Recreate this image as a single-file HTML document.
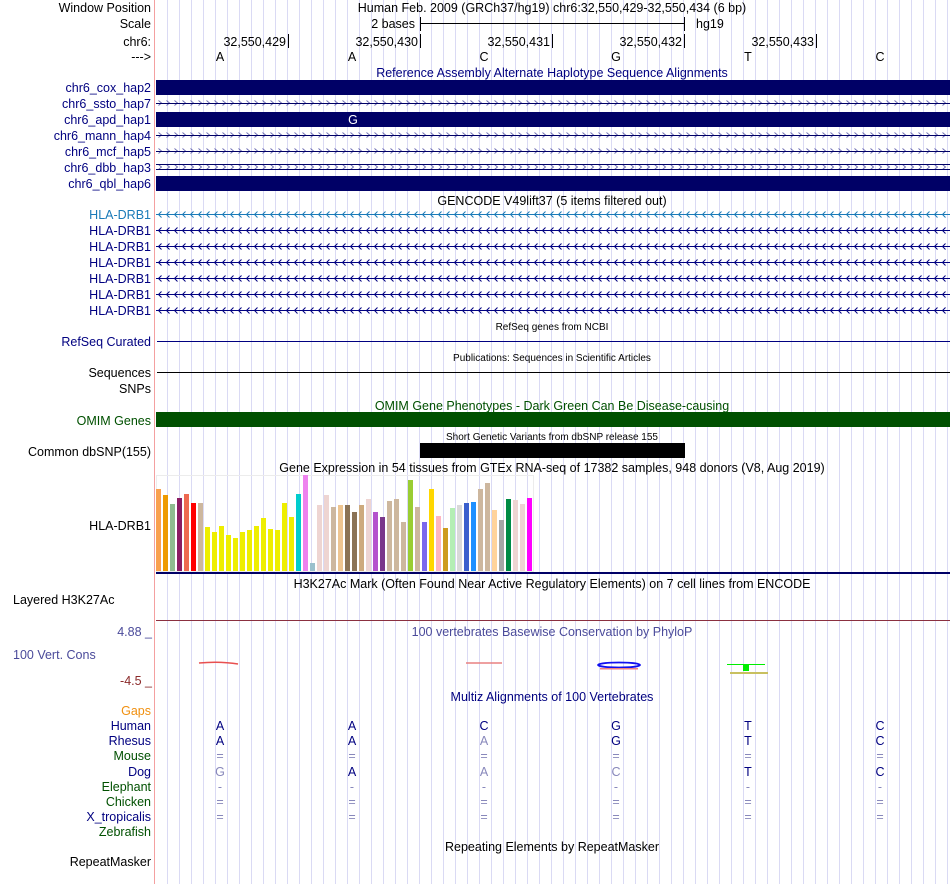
<!DOCTYPE html>
<html><head><meta charset="utf-8"><style>
html,body{margin:0;padding:0;background:#fff;width:950px;height:884px;overflow:hidden}
svg{display:block}
text{font-family:"Liberation Sans",sans-serif;font-size:12.5px}
.r{text-anchor:end}.m{text-anchor:middle}
.n{fill:#000080}.k{fill:#000}.g{fill:#005000}
.s{font-size:10px}
</style></head><body>
<svg width="950" height="884" xmlns="http://www.w3.org/2000/svg">
<defs>
<pattern id="grid" x="167" y="0" width="12" height="10" patternUnits="userSpaceOnUse">
<rect x="0" y="0" width="1" height="10" fill="#dadaf4"/>
</pattern>
<pattern id="fw" x="156" y="4" width="8" height="16" patternUnits="userSpaceOnUse">
<path d="M2.5 0.5 L5.5 3 L2.5 5.5" fill="none" stroke="#6a6ab0" stroke-width="0.9"/>
</pattern>
<pattern id="bk" x="156" y="3" width="8" height="16" patternUnits="userSpaceOnUse">
<path d="M5.5 0.5 L2.5 3.5 L5.5 6.5" fill="none" stroke="#000080" stroke-width="1"/>
</pattern>
<pattern id="bk2" x="156" y="3" width="8" height="16" patternUnits="userSpaceOnUse">
<path d="M5.5 0.5 L2.5 3.5 L5.5 6.5" fill="none" stroke="#1a7ab8" stroke-width="1"/>
</pattern>
</defs>
<rect x="156" y="0" width="794" height="884" fill="url(#grid)"/>
<rect x="154" y="0" width="1" height="884" fill="#f4a0a0"/>

<!-- ruler -->
<text x="151" y="12" class="r k">Window Position</text>
<text x="552" y="12" class="m k">Human Feb. 2009 (GRCh37/hg19)   chr6:32,550,429-32,550,434 (6 bp)</text>
<text x="151" y="28" class="r k">Scale</text>
<text x="415" y="28" class="r k">2 bases</text>
<rect x="420" y="17" width="1" height="14" fill="#000"/><rect x="420" y="23" width="264" height="1" fill="#000"/><rect x="684" y="17" width="1" height="14" fill="#000"/>
<text x="696" y="28" class="k">hg19</text>
<text x="151" y="46" class="r k">chr6:</text>
<text x="286" y="46" class="r k">32,550,429</text><rect x="288" y="34" width="1" height="14" fill="#000"/>
<text x="418" y="46" class="r k">32,550,430</text><rect x="420" y="34" width="1" height="14" fill="#000"/>
<text x="550" y="46" class="r k">32,550,431</text><rect x="552" y="34" width="1" height="14" fill="#000"/>
<text x="682" y="46" class="r k">32,550,432</text><rect x="684" y="34" width="1" height="14" fill="#000"/>
<text x="814" y="46" class="r k">32,550,433</text><rect x="816" y="34" width="1" height="14" fill="#000"/>
<text x="151" y="61" class="r k">---&gt;</text>
<text x="220" y="61" class="m k">A</text><text x="352" y="61" class="m k">A</text><text x="484" y="61" class="m k">C</text><text x="616" y="61" class="m k">G</text><text x="748" y="61" class="m k">T</text><text x="880" y="61" class="m k">C</text>

<!-- haplotypes -->
<text x="552" y="77" class="m n">Reference Assembly Alternate Haplotype Sequence Alignments</text>
<text x="151" y="92" class="r n">chr6_cox_hap2</text><rect x="156" y="80" width="794" height="15" fill="#000066"/>
<text x="151" y="108" class="r n">chr6_ssto_hap7</text><rect x="156" y="100" width="794" height="7" fill="url(#fw)"/><rect x="156" y="103" width="794" height="1" fill="#000066"/>
<text x="151" y="124" class="r n">chr6_apd_hap1</text><rect x="156" y="112" width="794" height="15" fill="#000066"/><text x="353" y="124" class="m" fill="#fff">G</text>
<text x="151" y="140" class="r n">chr6_mann_hap4</text><rect x="156" y="132" width="794" height="7" fill="url(#fw)"/><rect x="156" y="135" width="794" height="1" fill="#000066"/>
<text x="151" y="156" class="r n">chr6_mcf_hap5</text><rect x="156" y="148" width="794" height="7" fill="url(#fw)"/><rect x="156" y="151" width="794" height="1" fill="#000066"/>
<text x="151" y="172" class="r n">chr6_dbb_hap3</text><rect x="156" y="164" width="794" height="7" fill="url(#fw)"/><rect x="156" y="164" width="794" height="1" fill="#000066"/><rect x="156" y="169" width="794" height="1" fill="#000066"/>
<text x="151" y="188" class="r n">chr6_qbl_hap6</text><rect x="156" y="176" width="794" height="15" fill="#000066"/>

<!-- GENCODE -->
<text x="552" y="205" class="m k">GENCODE V49lift37 (5 items filtered out)</text>
<text x="151" y="219" class="r" fill="#1a7ab8">HLA-DRB1</text><rect x="156" y="211" width="794" height="8" fill="url(#bk2)"/><rect x="156" y="214" width="794" height="1" fill="#1a7ab8"/>
<g>
<text x="151" y="235" class="r n">HLA-DRB1</text><rect x="156" y="227" width="794" height="8" fill="url(#bk)"/><rect x="156" y="230" width="794" height="1" fill="#000080"/>
<text x="151" y="251" class="r n">HLA-DRB1</text><rect x="156" y="243" width="794" height="8" fill="url(#bk)"/><rect x="156" y="246" width="794" height="1" fill="#000080"/>
<text x="151" y="267" class="r n">HLA-DRB1</text><rect x="156" y="259" width="794" height="8" fill="url(#bk)"/><rect x="156" y="262" width="794" height="1" fill="#000080"/>
<text x="151" y="283" class="r n">HLA-DRB1</text><rect x="156" y="275" width="794" height="8" fill="url(#bk)"/><rect x="156" y="278" width="794" height="1" fill="#000080"/>
<text x="151" y="299" class="r n">HLA-DRB1</text><rect x="156" y="291" width="794" height="8" fill="url(#bk)"/><rect x="156" y="294" width="794" height="1" fill="#000080"/>
<text x="151" y="315" class="r n">HLA-DRB1</text><rect x="156" y="307" width="794" height="8" fill="url(#bk)"/><rect x="156" y="310" width="794" height="1" fill="#000080"/>
</g>

<text x="552" y="330" class="m k s">RefSeq genes from NCBI</text>
<text x="151" y="346" class="r n">RefSeq Curated</text><rect x="157" y="341" width="793" height="1" fill="#000080"/>
<text x="552" y="361" class="m k s">Publications: Sequences in Scientific Articles</text>
<text x="151" y="377" class="r k">Sequences</text><rect x="157" y="372" width="793" height="1" fill="#000"/>
<text x="151" y="393" class="r k">SNPs</text>
<text x="552" y="410" class="m g">OMIM Gene Phenotypes - Dark Green Can Be Disease-causing</text>
<text x="151" y="425" class="r g">OMIM Genes</text><rect x="156" y="412" width="794" height="15" fill="#005000"/>
<text x="552" y="440" class="m k s">Short Genetic Variants from dbSNP release 155</text>
<text x="151" y="456" class="r k">Common dbSNP(155)</text><rect x="420" y="443" width="265" height="15" fill="#000"/>
<text x="552" y="472" class="m k">Gene Expression in 54 tissues from GTEx RNA-seq of 17382 samples, 948 donors (V8, Aug 2019)</text>
<text x="151" y="530" class="r k">HLA-DRB1</text>
<rect x="156.5" y="475.5" width="377" height="96" fill="none" stroke="#ececec"/>
<rect x="156" y="572" width="794" height="2" fill="#000066"/>

<text x="552" y="588" class="m k">H3K27Ac Mark (Often Found Near Active Regulatory Elements) on 7 cell lines from ENCODE</text>
<text x="13" y="604" class="k">Layered H3K27Ac</text>
<rect x="156" y="620" width="794" height="1" fill="#8b3040"/>
<text x="152" y="636" class="r" fill="#4a4a9a">4.88 _</text>
<text x="552" y="636" class="m" fill="#4a4a9a">100 vertebrates Basewise Conservation by PhyloP</text>
<text x="13" y="659" fill="#4a4a9a">100 Vert. Cons</text>
<text x="152" y="685" class="r" fill="#8b2a2a">-4.5 _</text>
<path d="M199 663 Q220 661 238 664" stroke="#e85050" stroke-width="1.5" fill="none"/>
<path d="M466 663 L502 663" stroke="#e88080" stroke-width="1.5"/>
<ellipse cx="619" cy="665" rx="21" ry="2.5" fill="none" stroke="#1010f0" stroke-width="1.8"/>
<rect x="600" y="668" width="38" height="1.5" fill="#f08080"/>
<rect x="727" y="664" width="38" height="1" fill="#00ee00"/><rect x="743" y="664" width="6" height="7" fill="#00ee00"/>
<rect x="730" y="672" width="38" height="2" fill="#c8c060"/>

<text x="552" y="701" class="m n">Multiz Alignments of 100 Vertebrates</text>
<text x="151" y="715" class="r" fill="#f09010">Gaps</text>
<text x="151" y="730" class="r n">Human</text>
<text x="151" y="745" class="r n">Rhesus</text>
<text x="151" y="760" class="r g">Mouse</text>
<text x="151" y="776" class="r n">Dog</text>
<text x="151" y="791" class="r g">Elephant</text>
<text x="151" y="806" class="r g">Chicken</text>
<text x="151" y="821" class="r n">X_tropicalis</text>
<text x="151" y="836" class="r g">Zebrafish</text>
<g>
<text x="220" y="730" class="m n">A</text><text x="352" y="730" class="m n">A</text><text x="484" y="730" class="m n">C</text><text x="616" y="730" class="m n">G</text><text x="748" y="730" class="m n">T</text><text x="880" y="730" class="m n">C</text>
<text x="220" y="745" class="m n">A</text><text x="352" y="745" class="m n">A</text><text x="484" y="745" class="m" fill="#8888bb">A</text><text x="616" y="745" class="m n">G</text><text x="748" y="745" class="m n">T</text><text x="880" y="745" class="m n">C</text>
<text x="220" y="760" class="m" fill="#8888bb">=</text><text x="352" y="760" class="m" fill="#8888bb">=</text><text x="484" y="760" class="m" fill="#8888bb">=</text><text x="616" y="760" class="m" fill="#8888bb">=</text><text x="748" y="760" class="m" fill="#8888bb">=</text><text x="880" y="760" class="m" fill="#8888bb">=</text>
<text x="220" y="776" class="m" fill="#8888bb">G</text><text x="352" y="776" class="m n">A</text><text x="484" y="776" class="m" fill="#8888bb">A</text><text x="616" y="776" class="m" fill="#8888bb">C</text><text x="748" y="776" class="m n">T</text><text x="880" y="776" class="m n">C</text>
<text x="220" y="791" class="m" fill="#8888bb">-</text><text x="352" y="791" class="m" fill="#8888bb">-</text><text x="484" y="791" class="m" fill="#8888bb">-</text><text x="616" y="791" class="m" fill="#8888bb">-</text><text x="748" y="791" class="m" fill="#8888bb">-</text><text x="880" y="791" class="m" fill="#8888bb">-</text>
<text x="220" y="806" class="m" fill="#8888bb">=</text><text x="352" y="806" class="m" fill="#8888bb">=</text><text x="484" y="806" class="m" fill="#8888bb">=</text><text x="616" y="806" class="m" fill="#8888bb">=</text><text x="748" y="806" class="m" fill="#8888bb">=</text><text x="880" y="806" class="m" fill="#8888bb">=</text>
<text x="220" y="821" class="m" fill="#8888bb">=</text><text x="352" y="821" class="m" fill="#8888bb">=</text><text x="484" y="821" class="m" fill="#8888bb">=</text><text x="616" y="821" class="m" fill="#8888bb">=</text><text x="748" y="821" class="m" fill="#8888bb">=</text><text x="880" y="821" class="m" fill="#8888bb">=</text>
</g>
<text x="552" y="851" class="m k">Repeating Elements by RepeatMasker</text>
<text x="151" y="866" class="r k">RepeatMasker</text>

<!-- GTEx bars -->
<rect x="156" y="489" width="5" height="82" fill="#f9a04e"/>
<rect x="163" y="495" width="5" height="76" fill="#ee9a00"/>
<rect x="170" y="504" width="5" height="67" fill="#8fbc8f"/>
<rect x="177" y="498" width="5" height="73" fill="#8b1c62"/>
<rect x="184" y="494" width="5" height="77" fill="#ee6a50"/>
<rect x="191" y="503" width="5" height="68" fill="#ff0000"/>
<rect x="198" y="503" width="5" height="68" fill="#cdb79e"/>
<rect x="205" y="527" width="5" height="44" fill="#eeee00"/>
<rect x="212" y="532" width="5" height="39" fill="#eeee00"/>
<rect x="219" y="526" width="5" height="45" fill="#eeee00"/>
<rect x="226" y="535" width="5" height="36" fill="#eeee00"/>
<rect x="233" y="538" width="5" height="33" fill="#eeee00"/>
<rect x="240" y="532" width="5" height="39" fill="#eeee00"/>
<rect x="247" y="530" width="5" height="41" fill="#eeee00"/>
<rect x="254" y="526" width="5" height="45" fill="#eeee00"/>
<rect x="261" y="518" width="5" height="53" fill="#eeee00"/>
<rect x="268" y="529" width="5" height="42" fill="#eeee00"/>
<rect x="275" y="530" width="5" height="41" fill="#eeee00"/>
<rect x="282" y="503" width="5" height="68" fill="#eeee00"/>
<rect x="289" y="517" width="5" height="54" fill="#eeee00"/>
<rect x="296" y="494" width="5" height="77" fill="#00cdcd"/>
<rect x="303" y="475" width="5" height="96" fill="#ee82ee"/>
<rect x="310" y="563" width="5" height="8" fill="#9ac0cd"/>
<rect x="317" y="505" width="5" height="66" fill="#eed5d2"/>
<rect x="324" y="495" width="5" height="76" fill="#eed5d2"/>
<rect x="331" y="507" width="5" height="64" fill="#cdb79e"/>
<rect x="338" y="505" width="5" height="66" fill="#eec591"/>
<rect x="345" y="505" width="5" height="66" fill="#8b7355"/>
<rect x="352" y="512" width="5" height="59" fill="#8b7355"/>
<rect x="359" y="505" width="5" height="66" fill="#cdaa7d"/>
<rect x="366" y="499" width="5" height="72" fill="#eed5d2"/>
<rect x="373" y="512" width="5" height="59" fill="#b452cd"/>
<rect x="380" y="517" width="5" height="54" fill="#7a378b"/>
<rect x="387" y="501" width="5" height="70" fill="#cdb79e"/>
<rect x="394" y="499" width="5" height="72" fill="#cdb79e"/>
<rect x="401" y="522" width="5" height="49" fill="#cdb79e"/>
<rect x="408" y="480" width="5" height="91" fill="#9acd32"/>
<rect x="415" y="507" width="5" height="64" fill="#cdb79e"/>
<rect x="422" y="522" width="5" height="49" fill="#7b68ee"/>
<rect x="429" y="489" width="5" height="82" fill="#ffd700"/>
<rect x="436" y="516" width="5" height="55" fill="#ffb6c1"/>
<rect x="443" y="528" width="5" height="43" fill="#cd9b1d"/>
<rect x="450" y="508" width="5" height="63" fill="#b4eeb4"/>
<rect x="457" y="505" width="5" height="66" fill="#d9d9d9"/>
<rect x="464" y="503" width="5" height="68" fill="#3a5fcd"/>
<rect x="471" y="502" width="5" height="69" fill="#1e90ff"/>
<rect x="478" y="489" width="5" height="82" fill="#cdb79e"/>
<rect x="485" y="483" width="5" height="88" fill="#cdb79e"/>
<rect x="492" y="510" width="5" height="61" fill="#ffd39b"/>
<rect x="499" y="520" width="5" height="51" fill="#a6a6a6"/>
<rect x="506" y="499" width="5" height="72" fill="#008b45"/>
<rect x="513" y="500" width="5" height="71" fill="#eed5d2"/>
<rect x="520" y="504" width="5" height="67" fill="#eed5d2"/>
<rect x="527" y="498" width="5" height="73" fill="#ff00ff"/>
</svg>
</body></html>
